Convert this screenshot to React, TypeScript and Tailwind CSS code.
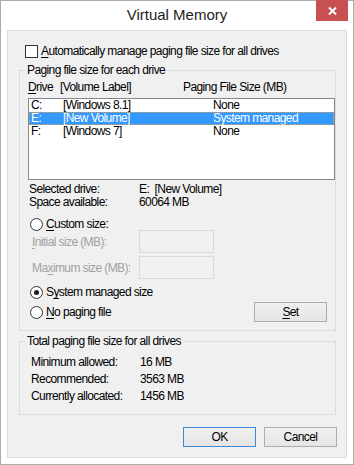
import type { ReactNode } from 'react'

function Acc({ c }: { c: string }) {
  return <span className="underline underline-offset-[2px] decoration-1">{c}</span>
}

function Radio({ on }: { on?: boolean }) {
  return (
    <span className="flex h-[13px] w-[13px] shrink-0 items-center justify-center rounded-full border border-[#333] bg-white">
      {on && <span className="h-[5px] w-[5px] rounded-full bg-[#1a1a1a]" />}
    </span>
  )
}

function Button({ children, primary }: { children: ReactNode; primary?: boolean }) {
  return (
    <button
      type="button"
      className={
        'flex h-[20px] w-[73px] items-center justify-center border bg-linear-to-b from-[#f0f0f0] to-[#e5e5e5] leading-none ' +
        (primary ? 'border-[#3c8ad8]' : 'border-[#acacac]')
      }
    >
      {children}
    </button>
  )
}

const drives = [
  { letter: 'C:', label: '[Windows 8.1]', size: 'None' },
  { letter: 'E:', label: '[New Volume]', size: 'System managed', selected: true },
  { letter: 'F:', label: '[Windows 7]', size: 'None' },
]

const totals = [
  ['Minimum allowed:', '16 MB'],
  ['Recommended:', '3563 MB'],
  ['Currently allocated:', '1456 MB'],
]

export default function App() {
  return (
    <div className="relative flex h-[465px] w-[354px] flex-col border border-[#ababab] bg-white font-['Liberation_Sans',Arial,sans-serif] text-[12px] tracking-[-0.6px] text-black">
      {/* title bar */}
      <div className="flex h-[29px] items-center justify-center text-[15px] tracking-normal text-[#1e1e1e]">
        Virtual Memory
      </div>
      <button
        type="button"
        className="absolute -top-px right-[5px] flex h-[21px] w-[32px] items-center justify-center bg-[#c75050]"
      >
        <svg width="9" height="8" viewBox="0 0 9 8">
          <path d="M1 0.5 L8 7.5 M8 0.5 L1 7.5" stroke="white" strokeWidth="2" />
        </svg>
      </button>

      {/* client area */}
      <div className="mx-[6px] flex h-[428px] flex-col border border-[#dadada] bg-[#f0f0f0]">
        <div className="ml-[17px] mt-[14px] flex h-[13px] items-center gap-[3px] leading-[13px]">
          <span className="h-[13px] w-[13px] border border-[#333] bg-white" />
          <span>
            <Acc c="A" />
            utomatically manage paging file size for all drives
          </span>
        </div>

        <fieldset className="ml-[11px] mt-[5px] w-[317px] min-w-0 border border-[#dcdcdc] pb-[8px]">
          <legend className="ml-[5px] px-[2px] leading-[15px]">Paging file size for each drive</legend>

          <div className="mt-[3px] flex h-[13px] pl-[8px] leading-[13px]">
            <span className="w-[32px]">
              <Acc c="D" />
              rive
            </span>
            <span className="w-[123px]">[Volume Label]</span>
            <span>Paging File Size (MB)</span>
          </div>

          <div className="ml-[8px] mt-[4px] flex h-[82px] w-[307px] flex-col border border-[#828790] bg-white">
            {drives.map((d) => (
              <div
                key={d.letter}
                className={
                  'flex h-[13px] pl-[2px] leading-[13px] ' +
                  (d.selected
                    ? 'bg-[#3399ff] text-white outline-1 -outline-offset-1 outline-dotted outline-[#e0a050]'
                    : '')
                }
              >
                <span className="w-[32px]">{d.letter}</span>
                <span className="w-[150px]">{d.label}</span>
                <span>{d.size}</span>
              </div>
            ))}
          </div>

          <div className="mt-[3px] flex h-[13px] pl-[9px] leading-[13px]">
            <span className="w-[110px]">Selected drive:</span>
            <span>E:&nbsp;&nbsp;[New Volume]</span>
          </div>
          <div className="flex h-[13px] pl-[9px] leading-[13px]">
            <span className="w-[110px]">Space available:</span>
            <span>60064 MB</span>
          </div>

          <div className="mt-[9px] flex h-[12px] items-center gap-[3px] pl-[10px] leading-[12px]">
            <Radio />
            <span>
              <Acc c="C" />
              ustom size:
            </span>
          </div>
          <div className="flex h-[23px] items-center">
            <span className="w-[119px] pl-[12px] text-[#a0a0a0]">
              <Acc c="I" />
              nitial size (MB):
            </span>
            <span className="h-[23px] w-[75px] border border-[#d9d9d9] bg-[#f0f0f0]" />
          </div>
          <div className="mt-[3px] flex h-[23px] items-center">
            <span className="w-[119px] pl-[12px] text-[#a0a0a0]">
              Ma
              <Acc c="x" />
              imum size (MB):
            </span>
            <span className="h-[23px] w-[75px] border border-[#d9d9d9] bg-[#f0f0f0]" />
          </div>

          <div className="mt-[7px] flex h-[13px] items-center gap-[3px] pl-[10px] leading-[13px]">
            <Radio on />
            <span>
              S<Acc c="y" />
              stem managed size
            </span>
          </div>
          <div className="mt-[3px] flex h-[20px] items-center pl-[10px] pr-[8px]">
            <div className="flex items-center gap-[3px]">
              <Radio />
              <span>
                <Acc c="N" />o paging file
              </span>
            </div>
            <div className="ml-auto">
              <Button>
                <Acc c="S" />
                et
              </Button>
            </div>
          </div>
        </fieldset>

        <fieldset className="ml-[11px] mt-[3px] w-[317px] min-w-0 border border-[#dcdcdc] pb-[9px]">
          <legend className="ml-[5px] px-[2px] leading-[15px]">Total paging file size for all drives</legend>
          <div className="mt-[5px] flex flex-col">
            {totals.map(([k, v]) => (
              <div key={k} className="flex h-[17px] pl-[11px] leading-[17px]">
                <span className="w-[109px]">{k}</span>
                <span>{v}</span>
              </div>
            ))}
          </div>
        </fieldset>

        <div className="mt-[12px] flex justify-end gap-[8px] pr-[9px]">
          <Button primary>OK</Button>
          <Button>Cancel</Button>
        </div>
      </div>
    </div>
  )
}
